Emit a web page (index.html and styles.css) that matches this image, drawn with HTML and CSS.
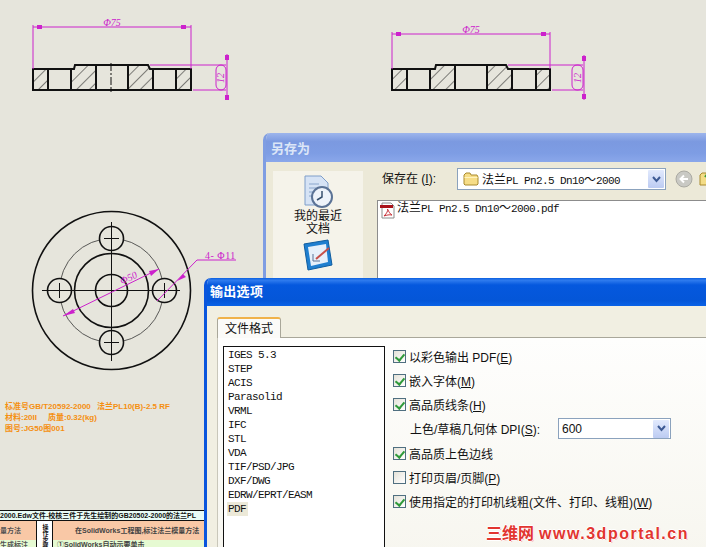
FILE: index.html
```html
<!DOCTYPE html>
<html lang="zh-CN">
<head>
    <meta charset="UTF-8">
    <meta name="viewport" content="width=device-width, initial-scale=1.0">
    <title>输出选项</title>
    <link rel="stylesheet" href="styles.css">
</head>
<body>
<div class="desktop">
    <!-- CAD sheet -->
    <svg class="sheet" width="706" height="547" viewBox="0 0 706 547">
        <defs>
            <pattern id="hatch" width="9" height="9" patternUnits="userSpaceOnUse" patternTransform="rotate(45)">
                <line x1="0" y1="0" x2="0" y2="9" class="thin"/>
            </pattern>
        </defs>

        <g>
            <path class="hatch" d="M33 69H48V90H33ZM71 69H75L76 65H96V90H71ZM128 65H148L150 69H153V90H128ZM176 69H191V90H176Z"/>
            <path class="thick" d="M33 69H74L75 65H148L150 69H191V90H33ZM48 69V90M71 69V90M96 65V90M128 65V90M153 69V90M176 69V90"/>
            <path class="center" d="M111 63V92"/>
            <path class="dim" d="M33 25V69M191 25V69M33 27H191M150 65H226M193 90H226M227 54V100"/>
            <path class="arrow" d="M37 25h5v4h-5zM181 25h5v4h-5zM225 55h4v5h-4zM225 95h4v5h-4z"/>
            <rect class="slot" x="216" y="65" width="10" height="25" rx="5"/>
            <text class="dim-text" x="112" y="26" text-anchor="middle">Φ75</text>
            <text class="dim-text" transform="translate(224 78) rotate(-90)" text-anchor="middle">12</text>
        </g>

        <g>
            <path class="hatch" d="M392 69H407V90H392ZM430 69H435L436 65H455V90H430ZM487 65H506L508 69H512V90H487ZM536 69H550V90H536Z"/>
            <path class="thick" d="M392 69H435L436 65H506L508 69H550V90H392ZM407 69V90M430 69V90M455 65V90M487 65V90M512 69V90M536 69V90"/>
            <path class="dim" d="M392 32V69M550 32V69M392 34H550M508 65H583M552 90H583M584 55V100"/>
            <path class="arrow" d="M396 32h5v4h-5zM541 32h5v4h-5zM582 56h4v5h-4zM582 94h4v5h-4z"/>
            <rect class="slot" x="572" y="65" width="11" height="25" rx="5"/>
            <text class="dim-text" x="471" y="33" text-anchor="middle">Φ75</text>
            <text class="dim-text" transform="translate(581 78) rotate(-90)" text-anchor="middle">12</text>
        </g>

        <g>
            <circle class="ring" cx="111.500" cy="290.500" r="79"/>
            <circle class="thin-ring" cx="111.500" cy="290.500" r="52"/>
            <circle class="ring fill" cx="111.500" cy="238.500" r="12"/>
            <circle class="ring fill" cx="111.500" cy="342.500" r="12"/>
            <circle class="ring fill" cx="59.500" cy="290.500" r="12"/>
            <circle class="ring fill" cx="164.500" cy="290.500" r="12"/>
            <circle class="ring" cx="111.500" cy="290.500" r="37"/>
            <circle class="ring" cx="111.500" cy="290.500" r="16"/>
            <path class="cross" d="M42 290.500H180M111.500 222V361M104 238.500H119M104 342.500H119M59.500 283V298M164.500 283V298"/>
            <path class="dim" d="M63 316L159 269M157 301L197 260H236"/>
            <path class="arrow" d="M63 316l10-7 2 4zM159 269l-10 2 2 5zM177 281l6-7 3 3z"/>
            <text class="dim-text" transform="translate(130 281) rotate(-26)" text-anchor="middle">Φ50</text>
            <text class="dim-text wide" x="205" y="259">4- Φ11</text>
        </g>

        <text class="note" x="5" y="409">标准号GB/T20592-2000 <tspan x="97">法兰PL10(B)-2.5 RF</tspan></text>
        <text class="note" x="5" y="420">材料:20II <tspan x="48">质量:0.32(kg)</tspan></text>
        <text class="note" x="5" y="431">图号:JG50图001</text>
    </svg>

    <!-- sheet of the tutorial table, cut off by the dialog -->
    <div class="tut">
        <div class="tut-head">2000.Edw文件-校核三件于先生绘制的GB20502-2000的法兰PL</div>
        <div class="tut-grid">
            <div class="tut-a">量方法</div>
            <div class="tut-b">操作步骤</div>
            <div class="tut-c tut-center">在SolidWorks工程图,标注法兰模量方法</div>
            <div class="tut-a tut-green">生成标注</div>
            <div class="tut-c tut-green">①SolidWorks自动示要单击</div>
        </div>
    </div>

    <!-- save as -->
    <section class="win win-save">
        <div class="win-title">另存为</div>
        <div class="save-body">
            <div class="places">
                <svg class="place-icon" width="32" height="34" viewBox="0 0 32 34">
                    <path d="M3 1H19L26 8V30H3Z" fill="#d6e3f5" stroke="#7f9ec9"/>
                    <path d="M7 9H17M7 13H14M7 17H12M7 21H11" stroke="#8aa6cc"/>
                    <circle cx="20" cy="22" r="10" fill="#eef3fa" stroke="#5b7396" stroke-width="2"/>
                    <path d="M20 16V22L15 25" fill="none" stroke="#37506e" stroke-width="1.500"/>
                </svg>
                <div class="place-label">我的最近<br>文档</div>
                <svg class="place-icon place-desktop" width="32" height="32" viewBox="0 0 32 32">
                    <path d="M2 5L26 1L30 26L6 31Z" fill="#1f7fd0" stroke="#0f5c9f"/>
                    <path d="M6 8L24 5L26 23L9 27Z" fill="#e6f0fa"/>
                    <path d="M14 20L27 9" stroke="#c6504a" stroke-width="2"/>
                    <path d="M11 15V22H18" fill="none" stroke="#5b7396"/>
                </svg>
            </div>
            <div class="save-main">
                <div class="save-bar">
                    <span class="save-label">保存在 (<u>I</u>):</span>
                    <div class="combo combo-save">
                        <svg class="folder" width="16" height="14" viewBox="0 0 16 14">
                            <path d="M1 3L3 1H7L8 3H14L15 5V12L14 13H2L1 12Z" fill="#f6dd87" stroke="#a98a2e"/>
                            <path d="M1.500 5.500H14.500" stroke="#fff3bd"/>
                        </svg>
                        <span class="mono"><span class="cjk">法兰</span>PL Pn2.5 Dn10<span class="cjk">～</span>2000</span>
                        <span class="combo-btn"><svg width="9" height="7" viewBox="0 0 9 7"><path d="M1 1L4.500 5L8 1" fill="none" stroke="#3d5a94" stroke-width="2"/></svg></span>
                    </div>
                    <svg class="back" width="18" height="18" viewBox="0 0 18 18">
                        <circle cx="9" cy="9" r="8" fill="#c9c9c4" stroke="#aaa9a2"/>
                        <path d="M13 9H6M9 5.500L5.500 9L9 12.500" fill="none" stroke="#fff" stroke-width="2"/>
                    </svg>
                    <svg class="up" width="18" height="16" viewBox="0 0 18 16">
                        <path d="M1 4L3 2H7L8 4H16V14H1Z" fill="#f3dc86" stroke="#a98a2e"/>
                        <path d="M9 9V3M6 6L9 2L12 6" fill="none" stroke="#3f9a3a" stroke-width="2"/>
                    </svg>
                </div>
                <div class="file-list">
                    <div class="file">
                        <svg width="17" height="17" viewBox="0 0 17 17">
                            <path d="M3 1H12L15 4V16H3Z" fill="#fff" stroke="#8c8c8c"/>
                            <rect x="1" y="3" width="13" height="3" fill="#a9121a"/>
                            <path d="M5 14C8 11 9 9 8.500 7C10 10 11 12 13 13C10 12.500 8 13 5 14Z" fill="none" stroke="#c8323a"/>
                        </svg>
                        <span class="mono"><span class="cjk">法兰</span>PL Pn2.5 Dn10<span class="cjk">～</span>2000.pdf</span>
                    </div>
                </div>
            </div>
        </div>
    </section>

    <!-- export options -->
    <section class="win win-export">
        <div class="win-title">输出选项</div>
        <div class="export-body">
            <div class="tab">文件格式</div>
            <div class="tab-panel">
                <ul class="formats mono">
                    <li>IGES 5.3</li>
                    <li>STEP</li>
                    <li>ACIS</li>
                    <li>Parasolid</li>
                    <li>VRML</li>
                    <li>IFC</li>
                    <li>STL</li>
                    <li>VDA</li>
                    <li>TIF/PSD/JPG</li>
                    <li>DXF/DWG</li>
                    <li>EDRW/EPRT/EASM</li>
                    <li class="picked">PDF</li>
                </ul>
                <div class="options">
                    <div class="opt"><span class="box on"></span><span>以彩色输出 PDF(<u>E</u>)</span></div>
                    <div class="opt"><span class="box on"></span><span>嵌入字体(<u>M</u>)</span></div>
                    <div class="opt"><span class="box on"></span><span>高品质线条(<u>H</u>)</span></div>
                    <div class="opt opt-dpi">
                        <span class="dpi-label">上色/草稿几何体 DPI(<u>S</u>):</span>
                        <div class="combo combo-dpi">
                            <span>600</span>
                            <span class="combo-btn"><svg width="9" height="7" viewBox="0 0 9 7"><path d="M1 1L4.500 5L8 1" fill="none" stroke="#3d5a94" stroke-width="2"/></svg></span>
                        </div>
                    </div>
                    <div class="opt"><span class="box on"></span><span>高品质上色边线</span></div>
                    <div class="opt"><span class="box"></span><span>打印页眉/页脚(<u>P</u>)</span></div>
                    <div class="opt"><span class="box on"></span><span>使用指定的打印机线粗(文件、打印、线粗)(<u>W</u>)</span></div>
                </div>
            </div>
        </div>
    </section>

    <div class="stamp"><span class="stamp-cjk">三维网</span>www.3dportal.cn</div>
</div>
</body>
</html>
```

FILE: styles.css
```css
* { margin: 0; padding: 0; box-sizing: border-box; }
body {
    font-family: "Liberation Sans", "Noto Sans CJK SC", sans-serif;
    font-size: 12px;
    color: #111;
    background: #e6e5dc;
}
.desktop {
    position: relative;
    width: 706px;
    height: 547px;
    overflow: hidden;
    background: #e6e5dc;
}
.mono {
    font-family: "Liberation Mono", "Noto Sans CJK SC", monospace;
    font-size: 11px;
    letter-spacing: -0.6px;
}
.cjk { font-size: 12px; letter-spacing: 0; }

/* drawing */
.sheet { position: absolute; left: 0; top: 0; }
.thick { fill: none; stroke: #111; stroke-width: 2; }
.ring { fill: none; stroke: #111; stroke-width: 1.6; }
.ring.fill { fill: #e6e5dc; }
.thin { stroke: #111; stroke-width: 1; }
.thin-ring { fill: none; stroke: #333; stroke-width: 0.8; }
.hatch { fill: url(#hatch); stroke: none; }
.center { fill: none; stroke: #111; stroke-width: 1; stroke-dasharray: 8 2 2 2; }
.cross { fill: none; stroke: #111; stroke-width: 1; }
.dim { fill: none; stroke: #cc22cc; stroke-width: 1; }
.arrow { fill: #cc22cc; stroke: none; }
.slot { fill: none; stroke: #cc22cc; stroke-width: 1; }
.dim-text {
    font-family: "Liberation Serif", serif;
    font-style: italic;
    font-size: 10px;
    fill: #cc22cc;
}
.dim-text.wide { font-style: normal; font-size: 10px; letter-spacing: 0.5px; }
.note {
    font-family: "Liberation Sans", "Noto Sans CJK SC", sans-serif;
    font-size: 8px;
    font-weight: 700;
    fill: #f58f10;
}

/* table under the dialog */
.tut {
    position: absolute;
    left: 0;
    top: 510px;
    width: 204px;
    height: 37px;
    overflow: hidden;
    font-size: 7px;
    font-weight: 700;
    white-space: nowrap;
    border-top: 1px solid #111;
}
.tut-head {
    height: 10px;
    line-height: 10px;
    background: #e8fbf6;
    border-bottom: 1px solid #111;
}
.tut-grid {
    display: grid;
    grid-template-columns: 36px 17px 1fr;
    grid-template-rows: 19px 10px;
}
.tut-a { background: #f9c8a6; line-height: 19px; color: #555; }
.tut-b {
    grid-column: 2;
    grid-row: 1 / 3;
    writing-mode: vertical-rl;
    background: #fff;
    border-left: 1px solid #111;
    border-right: 1px solid #111;
    text-align: center;
    font-size: 6px;
    line-height: 15px;
}
.tut-c { background: #f9c8a6; line-height: 19px; padding-left: 4px; color: #444; }
.tut-center { padding-left: 22px; }
.tut-green { background: #e6fad2; line-height: 10px; }

/* windows */
.win { position: absolute; border-radius: 7px 7px 0 0; overflow: hidden; }
.win-title {
    font-size: 13px;
    font-weight: 700;
    padding-left: 8px;
}
.win-save {
    left: 263px;
    top: 133px;
    width: 490px;
    height: 430px;
    background: #ece9d8;
    border-left: 3px solid #7f9de2;
}
.win-save .win-title {
    height: 29px;
    line-height: 32px;
    margin-left: -3px;
    padding-left: 8px;
    color: #dce6f7;
    background: linear-gradient(#9db5ec 0, #7b99e0 30%, #7e9de4 70%, #8aa7ea 100%);
}
.save-body { display: flex; padding: 6px 0 0 7px; }
.places {
    width: 90px;
    height: 240px;
    margin-top: 3px;
    margin-right: 14px;
    background: #f5f3ea;
    display: flex;
    flex-direction: column;
    align-items: center;
    text-align: center;
    line-height: 13px;
    padding-top: 4px;
}
.place-icon { flex: none; }
.place-label { margin-top: 1px; }
.place-desktop { margin-top: 3px; }
.save-main { flex: 1; }
.save-bar { display: flex; align-items: center; height: 22px; margin-bottom: 10px; }
.save-label { width: 80px; padding: 0 0 3px 5px; }
.combo {
    display: flex;
    align-items: center;
    background: #fff;
    border: 1px solid #8ba2bd;
}
.combo-save { width: 209px; height: 22px; padding-left: 5px; gap: 3px; }
.combo-btn {
    margin-left: auto;
    margin-right: 1px;
    width: 16px;
    height: 18px;
    display: flex;
    align-items: center;
    justify-content: center;
    background: linear-gradient(#e2eafd, #bccbf2);
    border-radius: 1px;
}
.back { margin-left: 9px; }
.up { margin-left: 6px; flex: none; }
.file-list {
    height: 220px;
    background: #fff;
    border: 1px solid #8c8c8c;
    padding: 1px;
}
.file { display: flex; align-items: flex-start; gap: 1px; height: 17px; line-height: 15px; }

.win-export {
    left: 204px;
    top: 278px;
    width: 540px;
    height: 290px;
    background: #f1efe2;
    border-left: 3px solid #0a55dd;
}
.win-export .win-title {
    height: 28px;
    line-height: 28px;
    margin-left: -3px;
    padding-left: 6px;
    color: #fff;
    letter-spacing: 0.3px;
    background: linear-gradient(#0a5fe0 0, #2f7bee 8%, #0558de 25%, #0456d8 80%, #0a62e6 100%);
}
.export-body { padding: 11px 0 0 10px; }
.tab {
    width: 64px;
    height: 21px;
    line-height: 20px;
    text-align: center;
    background: #fbfbf8;
    border: 1px solid #a9a79a;
    border-top: 2px solid #f0b24a;
    border-bottom: 0;
    border-radius: 3px 3px 0 0;
    position: relative;
    z-index: 1;
}
.tab-panel {
    display: flex;
    height: 220px;
    margin-top: -1px;
    padding: 8px 0 0 5px;
    background: linear-gradient(#fefefd, #f7f6ef);
    border-top: 1px solid #a9a79a;
    border-left: 1px solid #c9c7ba;
}
.formats {
    list-style: none;
    width: 162px;
    height: 210px;
    background: #fff;
    border: 1px solid #111;
    padding: 1px 0 0 3px;
    flex: none;
}
.formats li { height: 14px; line-height: 14px; padding-left: 1px; width: max-content; padding-right: 2px; }
.formats .picked { background: #ece9d8; }
.options {
    display: grid;
    grid-auto-rows: 24.25px;
    margin: -2px 0 0 8px;
    align-content: start;
}
.opt { display: flex; align-items: center; gap: 3px; white-space: nowrap; }
.box {
    position: relative;
    width: 13px;
    height: 13px;
    flex: none;
    border: 1px solid #4f6f80;
    background: linear-gradient(135deg, #e4e2d8, #fff);
}
.box.on::after {
    content: "";
    position: absolute;
    left: 3px;
    top: 1px;
    width: 4px;
    height: 7px;
    border: solid #2f9a3a;
    border-width: 0 2px 2px 0;
    transform: rotate(40deg);
}
.opt-dpi { gap: 0; }
.dpi-label { width: 165px; padding-left: 17px; }
.combo-dpi { width: 113px; height: 21px; padding-left: 3px; font-size: 12px; }

.stamp {
    position: absolute;
    left: 486px;
    top: 524px;
    font-size: 16px;
    font-weight: 700;
    line-height: 20px;
    letter-spacing: 1.5px;
    color: #e2352f;
    white-space: nowrap;
    text-shadow: -1px 0 #fff, 1px 0 #fff, 0 -1px #fff, 0 1px #fff, 1px 1px #f4b0a8;
}
.stamp-cjk { letter-spacing: 0; margin-right: 5px; }
```
